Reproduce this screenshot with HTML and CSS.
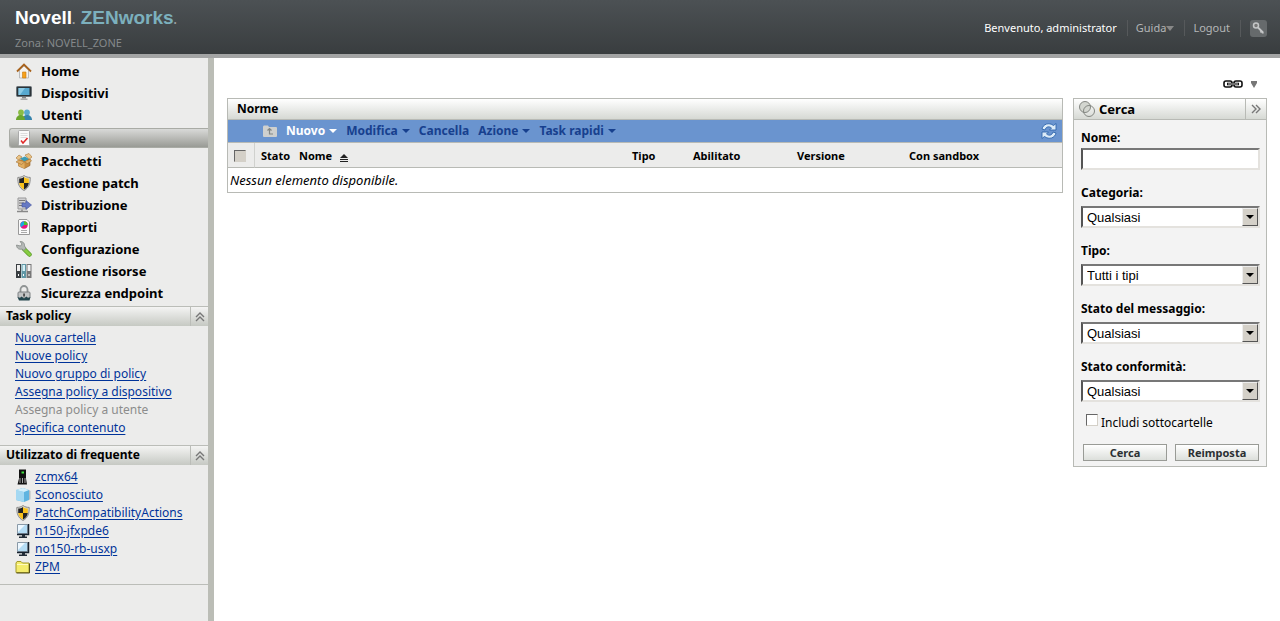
FILE: index.html
```html
<!DOCTYPE html>
<html lang="it">
<head>
  <meta charset="UTF-8">
  <meta name="viewport" content="width=device-width, initial-scale=1.0">
  <title>Novell ZENworks - Norme</title>
  <link rel="stylesheet" href="styles.css">
</head>
<body>
  <!-- shared icons -->
  <svg class="defs" width="0" height="0">
    <symbol id="shield" viewBox="0 0 16 16">
      <path d="M8 .5C6 2 4 2.400 1.800 2.400 1.500 8 3 13 8 15.500 13 13 14.500 8 14.200 2.400 12 2.400 10 2 8 .5z" fill="#d8d8d4" stroke="#777" stroke-width=".8"/>
      <path d="M8 2C6.500 3 5 3.500 3.200 3.600V8H8z" fill="#222"/>
      <path d="M8 2c1.500 1 3 1.500 4.800 1.600V8H8z" fill="#f9c21c"/>
      <path d="M3.200 8C3.700 11 5 13 8 14.400V8z" fill="#f9c21c"/>
      <path d="M12.800 8c-.5 3-1.800 5-4.800 6.400V8z" fill="#222"/>
    </symbol>
    <symbol id="pc" viewBox="0 0 16 16">
      <path d="M2.500 1.500h10v9h-10z" fill="#b4dcf4" stroke="#8a9aa8"/>
      <path d="M3 2h7L3 9z" fill="#eef8ff"/>
      <path d="M13.500 1v10.500H2" fill="none" stroke="#16212d" stroke-width="1.500"/>
      <path d="M7 12h3v1.500h2V15H4v-1.500h3z" fill="#222d38"/>
    </symbol>
    <symbol id="up" viewBox="0 0 10 10">
      <path d="M1 5l4-4 4 4M1 9l4-4 4 4" fill="none" stroke="#777" stroke-width="1.400"/>
    </symbol>
    <symbol id="down" viewBox="0 0 8 4">
      <path d="M0 0h8L4 4z" fill="currentColor"/>
    </symbol>
  </svg>

  <div class="header">
    <div class="brand">
      <div class="logo">Novell<i>.</i> <span>ZENworks<i>.</i></span></div>
      <div class="zone">Zona: NOVELL_ZONE</div>
    </div>
    <div class="user">
      <span class="welcome">Benvenuto, administrator</span>
      <a href="#">Guida<svg width="8" height="5"><path d="M0 0h8L4 5z" fill="#888"/></svg></a>
      <a href="#">Logout</a>
      <button class="key" aria-label="Password">
        <svg width="17" height="17" viewBox="0 0 17 17">
          <circle cx="6" cy="5.500" r="2.500" fill="#777" stroke="#c4c6c7" stroke-width="1.500"/>
          <path d="M8 7.500l5 5M11.500 11l-1 1.500M13 12l-.5 1.500" stroke="#c4c6c7" stroke-width="1.800" fill="none"/>
        </svg>
      </button>
    </div>
  </div>

  <div class="container">
    <div class="sidebar">
      <ul class="nav">
        <li><a href="#">
          <svg width="16" height="16" viewBox="0 0 16 16"><path d="M3.500 7v8h9V7L8 3z" fill="#f6f3ee" stroke="#bbb"/><path d="M6.500 9h3.500v6H6.500z" fill="#f7a11b" stroke="#c77a10" stroke-width=".6"/><path d="M1 8.500l7-7 7 7" fill="none" stroke="#a8631d" stroke-width="1.800"/></svg>
          Home</a></li>
        <li><a href="#">
          <svg width="16" height="16" viewBox="0 0 16 16"><rect x=".5" y="1.500" width="15" height="10" rx="1" fill="#2b3338" stroke="#6b7378"/><path d="M2.500 3h11v7h-11z" fill="#58a9d0"/><path d="M2.500 3H9L4 10H2.500z" fill="#8ccbe6"/><path d="M6 12h4v1.500H6z" fill="#888"/><path d="M4.500 13.500h7V15h-7z" fill="#aaa"/></svg>
          Dispositivi</a></li>
        <li><a href="#">
          <svg width="16" height="16" viewBox="0 0 16 16"><circle cx="11" cy="5.500" r="2.900" fill="#5aa9cb"/><path d="M6.500 13c0-3 1.500-5 4.500-5s5 2 5 5z" fill="#3583ab"/><circle cx="5" cy="5.500" r="2.900" fill="#8abc45"/><path d="M0 13c0-3 2-5 5-5 2.500 0 4 2 4 5z" fill="#6ba62c"/></svg>
          Utenti</a></li>
        <li class="active"><a href="#">
          <svg width="16" height="16" viewBox="0 0 16 16"><rect x="2.500" y=".5" width="11" height="15" rx="1" fill="#fafafa" stroke="#aaa"/><path d="M4.500 3.500h7M4.500 5.500h7M4.500 7.500h6" stroke="#ddd"/><path d="M5 10.500l2 2.500 4.500-5" fill="none" stroke="#e02828" stroke-width="1.500"/></svg>
          Norme</a></li>
        <li><a href="#">
          <svg width="16" height="16" viewBox="0 0 16 16"><path d="M2.500 7v6l6 2.500 5.500-3V6z" fill="#c78c3e" stroke="#8d5b20" stroke-width=".6"/><path d="M2.500 7l6 2v6.500l-6-2.500z" fill="#e0ad60"/><path d="M0 5l3-3 3 2-3.500 3zM9 2l4-1.500L16 4l-3 2.500z" fill="#e9c487" stroke="#a97535" stroke-width=".6"/><path d="M4 5.500l5-2 4 2.500-4.500 2.500z" fill="#3a9cb5"/><path d="M2.500 7L0 9l5.500 2.500 3-2.500 3 1.500L15.500 8 14 6 8.500 8.800z" fill="#dfae66" stroke="#9b6a2a" stroke-width=".5"/></svg>
          Pacchetti</a></li>
        <li><a href="#">
          <svg width="16" height="16"><use href="#shield"/></svg>
          Gestione patch</a></li>
        <li><a href="#">
          <svg width="16" height="16" viewBox="0 0 16 16"><path d="M2 1h8v11H2z" fill="#d2d2d4" stroke="#999"/><path d="M3 3.500h6M3 6h5M3 8.500h5" stroke="#777"/><path d="M6 12.500v2M1 14.500h11" stroke="#888" stroke-width="1.500"/><path d="M6 6h4V3.500L15.500 8 10 12.500V10H6z" fill="#6679c4" stroke="#4556a0" stroke-width=".6"/></svg>
          Distribuzione</a></li>
        <li><a href="#">
          <svg width="16" height="16" viewBox="0 0 16 16"><path d="M3 .5h8l2.500 2.500v12.500H2.500V1z" fill="#fafafa" stroke="#999"/><circle cx="8" cy="6" r="3.700" fill="#e8187f"/><path d="M8 6V2.300A3.700 3.700 0 0 0 5 8.200z" fill="#1aa9e0"/><path d="M8 6V2.300A3.700 3.700 0 0 1 11.700 6z" fill="#4fc12f"/><path d="M5 11.500h6M5 13.500h6" stroke="#aaa"/></svg>
          Rapporti</a></li>
        <li><a href="#">
          <svg width="16" height="16" viewBox="0 0 16 16"><path d="M8 8l5.500 5.500" stroke="#5d9c2a" stroke-width="4.500" stroke-linecap="round"/><path d="M8 8l5.500 5.500" stroke="#86cc40" stroke-width="3" stroke-linecap="round"/><path d="M.5 4c0 3.500 3 5 5.500 4L8 9.500l2-2.500-1.500-2C9 2.500 7 .3 4 .5L6 3 4.500 5z" fill="#b4b8b6" stroke="#7d8280" stroke-width=".7"/></svg>
          Configurazione</a></li>
        <li><a href="#">
          <svg width="16" height="16" viewBox="0 0 16 16"><path d="M0 1h5v14H0z" fill="#3a3f42"/><path d="M1 2h3v6H1z" fill="#eee"/><path d="M5.500 1h4.500v14H5.500z" fill="#5f97a5"/><path d="M6.500 2h2.500v6H6.500z" fill="#d7f1f6"/><path d="M10.500 1h5v14h-5z" fill="#777"/><path d="M11.500 2h3v6h-3z" fill="#f2f2f2"/><path d="M2 11h1v2H2zM7 11h1v2H7zM12.500 11h1v2h-1z" fill="#fff"/></svg>
          Gestione risorse</a></li>
        <li><a href="#">
          <svg width="16" height="16" viewBox="0 0 16 16"><path d="M4.500 8V4.500a3.500 3.500 0 0 1 7 0V8" fill="none" stroke="#909494" stroke-width="1.800"/><rect x="2" y="7" width="12" height="6" rx="1" fill="#c3c5c6" stroke="#7c8082"/><path d="M7.300 8.500h1.500v3H7.300z" fill="#333"/><path d="M1.500 12l2.500 1 1.500-1.500L8 13.500l2.500-2 1.500 1.500 2.500-1-1 3.500H3z" fill="#22454d"/></svg>
          Sicurezza endpoint</a></li>
      </ul>

      <div class="side-title"><span>Task policy</span><button aria-label="Comprimi"><svg width="10" height="10"><use href="#up"/></svg></button></div>
      <ul class="links">
        <li><a href="#">Nuova cartella</a></li>
        <li><a href="#">Nuove policy</a></li>
        <li><a href="#">Nuovo gruppo di policy</a></li>
        <li><a href="#">Assegna policy a dispositivo</a></li>
        <li class="off">Assegna policy a utente</li>
        <li><a href="#">Specifica contenuto</a></li>
      </ul>

      <div class="side-title"><span>Utilizzato di frequente</span><button aria-label="Comprimi"><svg width="10" height="10"><use href="#up"/></svg></button></div>
      <ul class="links recent">
        <li><svg width="16" height="16" viewBox="0 0 16 16"><path d="M4 .5h7v9l1 6H2.500L4 9.500z" fill="#111"/><path d="M6.500 2.500h2.500v2H6.500z" fill="#3fe03f"/><path d="M5 9v5M7.500 9v5M10 9v5" stroke="#aaa"/></svg><a href="#">zcmx64</a></li>
        <li><svg width="16" height="16" viewBox="0 0 16 16"><path d="M1 3l7-2 6 2v10l-5 2-8-2z" fill="#5fb4e0"/><path d="M1 3l8 2v10l-8-2z" fill="#a4d8f2"/><path d="M1 3l7-2 6 2-5 2z" fill="#d5effa"/><path d="M14 3l1.500 1v8L14 13z" fill="#b6bcc0"/></svg><a href="#">Sconosciuto</a></li>
        <li><svg width="16" height="16"><use href="#shield"/></svg><a href="#">PatchCompatibilityActions</a></li>
        <li><svg width="16" height="16"><use href="#pc"/></svg><a href="#">n150-jfxpde6</a></li>
        <li><svg width="16" height="16"><use href="#pc"/></svg><a href="#">no150-rb-usxp</a></li>
        <li><svg width="16" height="16" viewBox="0 0 16 16"><path d="M1 4l1-1.500h4L7.500 4H14v9.500H1z" fill="#f4ec6c" stroke="#a39a2c"/><path d="M2 5.500h11" stroke="#fffbc0"/><path d="M14.500 4.500V14H1.500" fill="none" stroke="#55501a"/></svg><a href="#">ZPM</a></li>
      </ul>
    </div>

    <div class="main">
      <div class="tools">
        <button aria-label="Collegamento"><svg width="20" height="8" viewBox="0 0 20 8"><rect x="1" y="1" width="8" height="6" rx="2" fill="#fff" stroke="#111" stroke-width="1.600"/><rect x="11" y="1" width="8" height="6" rx="2" fill="#fff" stroke="#111" stroke-width="1.600"/><path d="M4 4h12" stroke="#111" stroke-width="2.600"/><path d="M5 4h10" stroke="#ccc"/></svg></button>
        <button aria-label="Opzioni"><svg width="8" height="7"><path d="M1 0h6v2L4 7 1 2z" fill="#777"/></svg></button>
      </div>
      <div class="content">
        <div class="panel list">
          <h1 class="panel-title">Norme</h1>
          <div class="toolbar">
            <svg width="14" height="12" viewBox="0 0 14 12"><path d="M0 2q0-1.500 1-1.500h4l1 1.500h7q1 0 1 1v8q0 1-1 1H1q-1 0-1-1z" fill="#cfd0ce"/><path d="M4.500 5.500L6.500 3.500l2 2M6.500 4v5H10" fill="none" stroke="#838785" stroke-width="1.200"/></svg>
            <button class="on">Nuovo<svg width="8" height="4"><use href="#down"/></svg></button>
            <button>Modifica<svg width="8" height="4"><use href="#down"/></svg></button>
            <button>Cancella</button>
            <button>Azione<svg width="8" height="4"><use href="#down"/></svg></button>
            <button>Task rapidi<svg width="8" height="4"><use href="#down"/></svg></button>
            <button class="refresh" aria-label="Aggiorna"><svg width="16" height="16" viewBox="0 0 16 16"><path d="M1 6C2 1 8-1 12.500 2.500L15 .5v6.500H8.500L10.500 5C8 3 5 3.500 4 7z" fill="#dcebf8" stroke="#2f65ab" stroke-width=".9"/><path d="M15 10c-1 5-7 7-11.500 3.500L1 15.500V9h6.500l-2 2c2.500 2 5.500 1.500 6.500-2z" fill="#dcebf8" stroke="#2f65ab" stroke-width=".9"/></svg></button>
          </div>
          <table>
            <thead>
              <tr>
                <th class="c-check"><input type="checkbox" aria-label="Seleziona tutto"></th>
                <th class="c-state">Stato</th>
                <th>Nome<svg class="sort" width="8" height="8" viewBox="0 0 8 8"><path d="M4 0l4 4H0zM0 5h8v1H0zM0 7h8v1H0z" fill="#222"/></svg></th>
                <th class="c-type">Tipo</th>
                <th class="c-enabled">Abilitato</th>
                <th class="c-version">Versione</th>
                <th class="c-sandbox">Con sandbox</th>
              </tr>
            </thead>
            <tbody>
              <tr><td colspan="7">Nessun elemento disponibile.</td></tr>
            </tbody>
          </table>
        </div>

        <form class="panel search">
          <div class="panel-title">
            <svg width="18" height="18" viewBox="0 0 18 18"><circle cx="7" cy="7" r="5.500" fill="#d3d6d0" stroke="#858883"/><circle cx="11" cy="11" r="5.500" fill="none" stroke="#858883"/></svg>
            <h2>Cerca</h2>
            <button type="button" aria-label="Chiudi"><svg width="10" height="10" viewBox="0 0 10 10"><path d="M1 1l4 4-4 4M5 1l4 4-4 4" fill="none" stroke="#777" stroke-width="1.400"/></svg></button>
          </div>
          <div class="fields">
            <div class="field">
              <label for="name">Nome:</label>
              <input type="text" id="name">
            </div>
            <div class="field">
              <label for="category">Categoria:</label>
              <div class="select"><select id="category"><option>Qualsiasi</option></select><span class="arrow"></span></div>
            </div>
            <div class="field">
              <label for="type">Tipo:</label>
              <div class="select"><select id="type"><option>Tutti i tipi</option></select><span class="arrow"></span></div>
            </div>
            <div class="field">
              <label for="message">Stato del messaggio:</label>
              <div class="select"><select id="message"><option>Qualsiasi</option></select><span class="arrow"></span></div>
            </div>
            <div class="field">
              <label for="compliance">Stato conformità:</label>
              <div class="select"><select id="compliance"><option>Qualsiasi</option></select><span class="arrow"></span></div>
            </div>
            <div class="check">
              <input type="checkbox" id="sub">
              <label for="sub">Includi sottocartelle</label>
            </div>
            <div class="buttons">
              <button type="button">Cerca</button>
              <button type="button">Reimposta</button>
            </div>
          </div>
        </form>
      </div>
    </div>
  </div>
</body>
</html>
```
FILE: styles.css
```css
* {
  box-sizing: border-box;
}
body {
  margin: 0;
  min-height: 100vh;
  display: flex;
  flex-direction: column;
  font-family: "Noto Sans", "Open Sans", sans-serif;
  font-size: 12px;
  line-height: 18px;
  color: #000;
  background-color: #fff;
}
h1, h2, ul {
  margin: 0;
  padding: 0;
}
ul {
  list-style: none;
}
button {
  margin: 0;
  padding: 0;
  border: 0;
  background: none;
  font-family: inherit;
  cursor: pointer;
}
svg {
  flex: none;
}
.defs {
  position: absolute;
}

/* header */
.header {
  height: 58px;
  display: flex;
  justify-content: space-between;
  padding: 0 13px 0 15px;
  background: linear-gradient(#4c5154, #393d3f);
  border-bottom: 4px solid #a3a4a4;
}
.brand {
  padding-top: 8px;
}
.logo {
  font-family: "Liberation Sans", Arial, sans-serif;
  font-size: 19px;
  line-height: 20px;
  font-weight: bold;
  color: #fff;
}
.logo span {
  color: #7cb0bd;
}
.logo i {
  font-size: 12px;
  font-style: normal;
  color: #9a9ea0;
}
.zone {
  padding-top: 4px;
  font-size: 11px;
  color: #85898b;
}
.user {
  display: flex;
  align-items: center;
  padding-top: 2px;
  font-size: 11px;
}
.user a {
  display: flex;
  align-items: center;
  padding: 0 10px 0 8px;
  color: #b4b6b7;
  line-height: 16px;
  text-decoration: none;
  border-left: 1px solid #56595b;
}
.user .welcome {
  padding-right: 10px;
  color: #fff;
}
.user .key {
  padding-left: 9px;
  border-left: 1px solid #56595b;
  line-height: 0;
}
.key svg {
  background-color: #666a6c;
  border-radius: 3px;
}

/* left column */
.container {
  flex: 1;
  display: flex;
}
.sidebar {
  width: 214px;
  flex: none;
  background-color: #ececeb;
  border-right: 6px solid #bbbdb6;
}
.nav {
  padding: 2px 0;
}
.nav a {
  display: flex;
  align-items: center;
  gap: 9px;
  height: 22px;
  padding-left: 16px;
  font-size: 13px;
  font-weight: bold;
  color: #000;
  text-decoration: none;
}
.nav .active {
  padding: 2px 0 2px 9px;
}
.nav .active a {
  height: 20px;
  padding-left: 6px;
  background: linear-gradient(#d9dad8, #999b95);
  border: 1px solid #a9aba5;
  border-right: 0;
  border-radius: 3px 0 0 3px;
}
.side-title {
  display: flex;
  height: 20px;
  border-top: 1px solid #bbbdb8;
  background: linear-gradient(#f4f4f3, #c6c9c3);
  font-weight: bold;
  font-size: 12px;
}
.side-title span {
  flex: 1;
  padding-left: 6px;
}
.side-title button {
  width: 18px;
  border-left: 1px solid #bbbdb8;
  line-height: 0;
}
.links {
  padding: 3px 0 8px 15px;
  font-size: 12px;
}
.links a {
  color: #039;
  text-underline-offset: 2px;
}
.links .off {
  color: #8c8c8c;
}
.recent {
  border-bottom: 1px solid #bbbdb8;
}
.recent li {
  display: flex;
  align-items: center;
  gap: 4px;
}

/* content */
.main {
  flex: 1;
  min-width: 0;
  padding: 18px 13px 0;
}
.tools {
  display: flex;
  align-items: center;
  justify-content: flex-end;
  gap: 7px;
  height: 16px;
  padding-right: 9px;
}
.tools button {
  line-height: 0;
}
.content {
  display: flex;
  align-items: flex-start;
  gap: 10px;
  padding-top: 6px;
}
.panel {
  border: 1px solid #b8bab5;
}
.panel-title {
  height: 21px;
  background: linear-gradient(#fff, #d6d9d4);
  border-bottom: 1px solid #b8bab5;
  font-size: 12px;
  line-height: 20px;
  font-weight: bold;
}
.list {
  flex: 1;
  min-width: 0;
}
.list .panel-title {
  padding-left: 9px;
}
.toolbar {
  display: flex;
  align-items: center;
  gap: 9px;
  height: 23px;
  padding: 0 5px 0 35px;
  background-color: #6a94cf;
  border-bottom: 1px solid #b8bab5;
}
.toolbar button {
  display: flex;
  align-items: center;
  gap: 4px;
  font-size: 12px;
  line-height: 20px;
  font-weight: bold;
  color: #17408e;
}
.toolbar .on {
  color: #fff;
}
.toolbar .refresh {
  margin-left: auto;
}
table {
  width: 100%;
  border-spacing: 0;
  table-layout: fixed;
}
th {
  height: 25px;
  padding: 2px 0 0 6px;
  background-color: #ececeb;
  border-bottom: 1px solid #b8bab5;
  font-size: 11px;
  text-align: left;
}
td {
  height: 24px;
  padding: 0 2px;
  font-size: 13px;
  font-style: italic;
}
.c-check {
  width: 27px;
  border-right: 1px solid #d0d1ce;
  line-height: 0;
}
.c-state {
  width: 38px;
}
.c-type {
  width: 61px;
}
.c-enabled {
  width: 104px;
}
.c-version {
  width: 112px;
}
.c-sandbox {
  width: 159px;
}
.sort {
  margin-left: 8px;
  vertical-align: -2px;
}
input[type="checkbox"] {
  appearance: none;
  width: 12px;
  height: 12px;
  margin: 0;
  background-color: #fff;
  border: 1px solid;
  border-color: #666 #d4d0c8 #d4d0c8 #666;
}
th input[type="checkbox"] {
  background-color: #d4d0c8;
}

/* search */
.search {
  width: 194px;
  flex: none;
  background-color: #f3f3f3;
}
.search .panel-title {
  display: flex;
  align-items: center;
  gap: 3px;
  padding-left: 4px;
}
.search h2 {
  flex: 1;
  font-size: 13px;
}
.search .panel-title button {
  width: 21px;
  height: 20px;
  border-left: 1px solid #b8bab5;
  line-height: 0;
}
.fields {
  padding: 9px 6px 5px 7px;
}
.field {
  margin-bottom: 14px;
}
.field label {
  display: block;
  height: 22px;
  font-size: 12px;
  font-weight: bold;
}
.field:first-child label {
  height: 19px;
}
.field:nth-child(5) {
  margin-bottom: 12px;
}
.field input, .select {
  display: block;
  width: 100%;
  height: 22px;
  background-color: #fff;
  border: 2px solid;
  border-color: #777 #e4e2de #e4e2de #555;
}
.select {
  display: flex;
}
.select select {
  appearance: none;
  flex: 1;
  min-width: 0;
  padding: 0 4px;
  border: 0;
  background: none;
  font-family: "Liberation Sans", Arial, sans-serif;
  font-size: 13px;
  color: #000;
}
.arrow {
  display: flex;
  align-items: center;
  justify-content: center;
  width: 16px;
  background-color: #d4d0c8;
  border: 1px solid;
  border-color: #eee #555 #555 #eee;
  pointer-events: none;
}
.arrow::after {
  content: "";
  border: 4px solid transparent;
  border-top-color: #000;
  border-bottom: 0;
}
.check {
  display: flex;
  gap: 3px;
  height: 20px;
  padding-left: 5px;
}
.buttons {
  display: flex;
  gap: 8px;
  padding: 10px 1px 0 2px;
}
.buttons button {
  flex: 1;
  height: 17px;
  background: linear-gradient(#fff, #dcdfdb);
  border: 1px solid #999b96;
  font-size: 11px;
  line-height: 15px;
  font-weight: bold;
  color: #2b3033;
}
```
